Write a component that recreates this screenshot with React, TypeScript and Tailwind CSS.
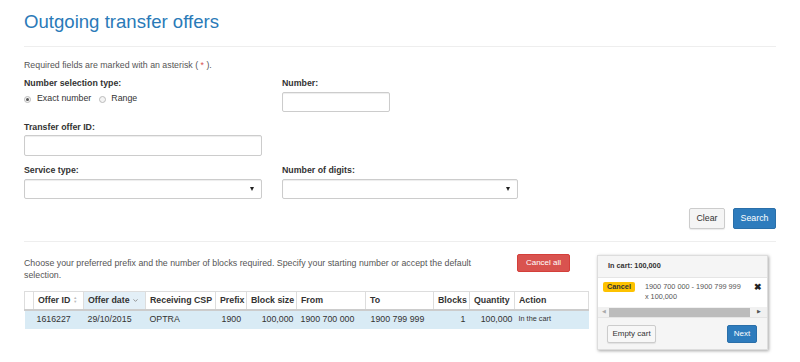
import { ChevronDown } from 'lucide-react'

const cols = [
  { key: 'gap', label: '', w: 'w-[8px]' },
  { key: 'id', label: 'Offer ID', w: 'w-[50px]', sort: 'both' },
  { key: 'date', label: 'Offer date', w: 'w-[62px]', sort: 'down' },
  { key: 'csp', label: 'Receiving CSP', w: 'w-[70px]' },
  { key: 'prefix', label: 'Prefix', w: 'w-[31px]' },
  { key: 'block', label: 'Block size', w: 'w-[50px]' },
  { key: 'from', label: 'From', w: 'w-[69px]' },
  { key: 'to', label: 'To', w: 'w-[68px]' },
  { key: 'blocks', label: 'Blocks', w: 'w-[36px]' },
  { key: 'qty', label: 'Quantity', w: 'w-[45px]' },
  { key: 'action', label: 'Action', w: 'w-[74px]' },
]

function Label({ children }: { children: React.ReactNode }) {
  return <div className="text-[8.8px] leading-[12px] font-bold text-[#333]">{children}</div>
}

function Select({ className }: { className: string }) {
  return (
    <div className={`h-[20px] mt-[3px] bg-white border border-[#ccc] rounded-[2px] shadow-[inset_0_1px_1px_rgba(0,0,0,0.075)] flex items-center justify-end pr-[7px] ${className}`}>
      <span className="w-0 h-0 border-l-[2.5px] border-r-[2.5px] border-t-[4px] border-l-transparent border-r-transparent border-t-[#222]" />
    </div>
  )
}

function Radio({ checked }: { checked?: boolean }) {
  return (
    <span className="w-[7px] h-[7px] rounded-full border border-[#bbb] bg-[#f4f4f4] flex items-center justify-center">
      {checked && <span className="w-[3px] h-[3px] rounded-full bg-[#555]" />}
    </span>
  )
}

function SortBoth() {
  return (
    <span className="inline-flex flex-col ml-[3px] text-[#bbb] leading-none align-middle">
      <span className="text-[4px] leading-[4px]">▲</span>
      <span className="text-[4px] leading-[4px]">▼</span>
    </span>
  )
}

export default function App() {
  return (
    <div className="w-[800px] h-[362px] bg-white px-6 font-['Liberation_Sans',Arial,sans-serif] text-[#333] overflow-hidden">
      <h1 className="pt-[9px] text-[18.6px] leading-[26px] text-[#2a7ab8]">Outgoing transfer offers</h1>
      <div className="mt-[11px] border-t border-[#eee]" />

      <p className="mt-[12px] text-[8.8px] leading-[12px] text-[#555]">
        Required fields are marked with an asterisk ( <span className="text-[#d9534f]">*</span> ).
      </p>

      <div className="mt-[6px] flex gap-[20px]">
        <div className="w-[238px]">
          <Label>Number selection type:</Label>
          <div className="mt-[4px] h-[12px] flex items-center text-[8.8px] text-[#333]">
            <Radio checked />
            <span className="ml-[6px]">Exact number</span>
            <span className="ml-[8px]"><Radio /></span>
            <span className="ml-[5px]">Range</span>
          </div>
        </div>
        <div>
          <Label>Number:</Label>
          <div className="mt-[3px] w-[108px] h-[20px] border border-[#ccc] rounded-[2px] shadow-[inset_0_1px_1px_rgba(0,0,0,0.075)]" />
        </div>
      </div>

      <div className="mt-[9px]">
        <Label>Transfer offer ID:</Label>
        <div className="mt-[2px] w-[238px] h-[21px] border border-[#ccc] rounded-[2px] shadow-[inset_0_1px_1px_rgba(0,0,0,0.075)]" />
      </div>

      <div className="mt-[8px] flex gap-[20px]">
        <div className="w-[238px]">
          <Label>Service type:</Label>
          <Select className="w-[238px]" />
        </div>
        <div>
          <Label>Number of digits:</Label>
          <Select className="w-[236px]" />
        </div>
      </div>

      <div className="mt-[9px] flex justify-end gap-[8px]">
        <button className="h-[21px] w-[36px] text-[8.8px] text-[#333] bg-[#f5f5f5] border border-[#ccc] rounded-[2px] shadow-[0_1px_1px_rgba(0,0,0,0.08)]">Clear</button>
        <button className="h-[21px] w-[43px] text-[8.8px] text-white bg-[#2e7cbd] border border-[#2a6fa9] rounded-[2px]">Search</button>
      </div>

      <div className="mt-[12px] border-t border-[#eee]" />

      <div className="flex mt-[12px]">
        <div className="w-[563px]">
          <div className="flex items-start">
            <p className="w-[460px] mt-[3px] text-[8.8px] leading-[12px] text-[#555]">
              Choose your preferred prefix and the number of blocks required. Specify your starting number or accept the default selection.
            </p>
            <button className="ml-[33px] h-[18px] w-[53px] text-[8px] text-white bg-[#d9534f] border border-[#d43f3a] rounded-[2px]">Cancel all</button>
          </div>

          <table className="mt-[10px] w-[563px] table-fixed border-collapse text-[8.8px]">
            <thead>
              <tr className="h-[18px] border-t border-[#ddd]">
                {cols.map((c) => (
                  <th
                    key={c.key}
                    className={`${c.w} px-[4px] text-left font-bold text-[#333] border-l border-r border-[#ddd] border-b-2 border-b-[#ccc] whitespace-nowrap ${c.key === 'date' ? 'bg-[#e3eff7]' : ''}`}
                  >
                    {c.label}
                    {c.sort === 'both' && <SortBoth />}
                    {c.sort === 'down' && <ChevronDown className="inline w-[7px] h-[7px] ml-[2px] text-[#888] stroke-[3]" />}
                  </th>
                ))}
              </tr>
            </thead>
            <tbody>
              <tr className="h-[19px] bg-[#d9ebf5] text-[#333]">
                <td />
                <td className="px-[3px]">1616227</td>
                <td className="px-[4px]">29/10/2015</td>
                <td className="px-[4px]">OPTRA</td>
                <td className="px-[6px]">1900</td>
                <td className="px-[3px] text-right">100,000</td>
                <td className="px-[4px]">1900 700 000</td>
                <td className="px-[5px]">1900 799 999</td>
                <td className="px-[4px] text-right">1</td>
                <td className="px-[2px] text-right">100,000</td>
                <td className="px-[4px] text-[7.3px]">In the cart</td>
              </tr>
            </tbody>
          </table>
        </div>

        <div className="ml-[10px] mt-[1px] w-[171px] h-[95px] border border-[#ddd] shadow-[1px_1px_3px_rgba(0,0,0,0.35)] flex flex-col text-[7.3px]">
          <div className="h-[22px] shrink-0 bg-[#f5f5f5] border-b border-[#e5e5e5] flex items-center pl-[10px] font-bold text-[#333]">
            In cart: 100,000
          </div>
          <div className="bg-white flex items-start pt-[4px] pl-[5px] pr-[5px] h-[29px] shrink-0">
            <span className="h-[10px] px-[4px] bg-[#fdc200] rounded-[2px] font-bold text-[#333] leading-[10px]">Cancel</span>
            <div className="ml-[10px] text-[#555] leading-[10px] flex-1">
              <div>1900 700 000 - 1900 799 999</div>
              <div>x 100,000</div>
            </div>
            <span className="text-[9px] leading-[10px] font-bold text-[#222]">✖</span>
          </div>
          <div className="h-[10px] shrink-0 bg-[#f1f1f1] flex items-center">
            <span className="w-[11px] text-center text-[5px] text-[#aaa]">◀</span>
            <div className="flex-1 h-[9px] bg-[#bcbcbc]" />
            <span className="w-[17px] text-center text-[5px] text-[#555]">▶</span>
          </div>
          <div className="flex-1 bg-[#f5f5f5] border-t border-[#e5e5e5] flex items-center justify-between pl-[9px] pr-[10px]">
            <button className="h-[18px] w-[49px] text-[8px] text-[#333] bg-[#f7f7f7] border border-[#ccc] rounded-[2px] shadow-[0_1px_1px_rgba(0,0,0,0.08)]">Empty cart</button>
            <button className="h-[18px] w-[30px] text-[8px] text-white bg-[#2e7cbd] border border-[#2a6fa9] rounded-[2px]">Next</button>
          </div>
        </div>
      </div>
    </div>
  )
}
